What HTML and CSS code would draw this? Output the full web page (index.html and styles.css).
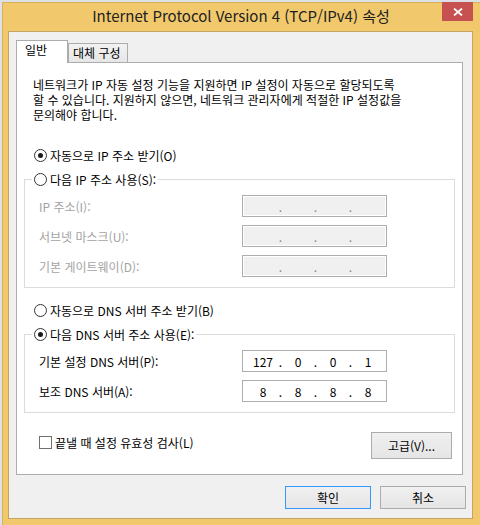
FILE: index.html
```html
<!DOCTYPE html>
<html lang="ko">
<head>
    <meta charset="UTF-8">
    <title>Internet Protocol Version 4 (TCP/IPv4) 속성</title>
    <link rel="stylesheet" href="styles.css">
</head>
<body>
    <div class="window">
        <div class="titlebar">
            <span></span>
            <div class="title">Internet Protocol Version 4 (TCP/IPv4) 속성</div>
            <button class="close">
                <svg width="10" height="8" viewBox="0 0 10 8">
                    <path d="M1 0.5 L9 7.5 M9 0.5 L1 7.5" stroke="#fff" stroke-width="1.7" fill="none"/>
                </svg>
            </button>
        </div>
        <div class="client">
            <div class="tabs">
                <div class="tab active">일반</div>
                <div class="tab">대체 구성</div>
            </div>
            <div class="panel">
                <p class="intro">네트워크가 IP 자동 설정 기능을 지원하면 IP 설정이 자동으로 할당되도록<br>할 수 있습니다. 지원하지 않으면, 네트워크 관리자에게 적절한 IP 설정값을<br>문의해야 합니다.</p>

                <label class="option"><input type="radio" name="ip" checked>자동으로 IP 주소 받기(O)</label>
                <fieldset class="group">
                    <legend><label class="option"><input type="radio" name="ip">다음 IP 주소 사용(S):</label></legend>
                    <div class="fields">
                        <div class="field disabled">
                            <span>IP 주소(I):</span>
                            <div class="ipbox"><span class="octet"></span><span class="dot">.</span><span class="octet"></span><span class="dot">.</span><span class="octet"></span><span class="dot">.</span><span class="octet"></span></div>
                        </div>
                        <div class="field disabled">
                            <span>서브넷 마스크(U):</span>
                            <div class="ipbox"><span class="octet"></span><span class="dot">.</span><span class="octet"></span><span class="dot">.</span><span class="octet"></span><span class="dot">.</span><span class="octet"></span></div>
                        </div>
                        <div class="field disabled">
                            <span>기본 게이트웨이(D):</span>
                            <div class="ipbox"><span class="octet"></span><span class="dot">.</span><span class="octet"></span><span class="dot">.</span><span class="octet"></span><span class="dot">.</span><span class="octet"></span></div>
                        </div>
                    </div>
                </fieldset>

                <label class="option"><input type="radio" name="dns">자동으로 DNS 서버 주소 받기(B)</label>
                <fieldset class="group">
                    <legend><label class="option"><input type="radio" name="dns" checked>다음 DNS 서버 주소 사용(E):</label></legend>
                    <div class="fields">
                        <div class="field">
                            <span>기본 설정 DNS 서버(P):</span>
                            <div class="ipbox"><span class="octet">127</span><span class="dot">.</span><span class="octet">0</span><span class="dot">.</span><span class="octet">0</span><span class="dot">.</span><span class="octet">1</span></div>
                        </div>
                        <div class="field">
                            <span>보조 DNS 서버(A):</span>
                            <div class="ipbox"><span class="octet">8</span><span class="dot">.</span><span class="octet">8</span><span class="dot">.</span><span class="octet">8</span><span class="dot">.</span><span class="octet">8</span></div>
                        </div>
                    </div>
                </fieldset>

                <div class="check-row">
                    <label class="check"><input type="checkbox">끝낼 때 설정 유효성 검사(L)</label>
                    <button class="btn advanced">고급(V)...</button>
                </div>
            </div>
            <div class="footer">
                <button class="btn default">확인</button>
                <button class="btn">취소</button>
            </div>
        </div>
    </div>
</body>
</html>
```

FILE: styles.css
```css
* {
    margin: 0;
    padding: 0;
    box-sizing: border-box;
}
body {
    background: #dde1e6;
    font-family: "Noto Sans CJK KR", sans-serif;
    font-size: 12px;
    color: #000;
}
.window {
    width: 478px;
    height: 523px;
    margin: 2px 0 0 2px;
    background: #f1c96c;
    box-shadow: inset 1px 1px 0 #d9b05a;
}

/* title bar */
.titlebar {
    display: grid;
    grid-template-columns: 31px 1fr 31px;
    height: 29px;
    padding: 0 7px;
}
.title {
    text-align: center;
    line-height: 28px;
    font-size: 15px;
    color: #222;
}
.close {
    height: 19px;
    border: none;
    background: #c75050;
    display: flex;
    align-items: center;
    justify-content: center;
}

/* client area */
.client {
    height: 488px;
    margin: 0 7px 0 6px;
    padding: 8px 6px 0 7px;
    background: #f0f0f0;
    border: 1px solid #c4a463;
}
.tabs {
    display: flex;
    align-items: flex-end;
    height: 22px;
}
.tab {
    height: 19px;
    width: 60px;
    padding-left: 4px;
    line-height: 18px;
    border: 1px solid #acacac;
    border-bottom: none;
    background: linear-gradient(#f2f2f2, #e6e6e6);
}
.tab.active {
    position: relative;
    z-index: 1;
    height: 23px;
    width: 52px;
    padding-left: 8px;
    margin-bottom: -1px;
    background: #fff;
}
.panel {
    margin-right: 3px;
    padding: 0 7px 15px;
    background: #fff;
    border: 1px solid #acacac;
}
.intro {
    margin: 14px 0 0 9px;
    line-height: 15px;
}

/* radio, checkbox */
.option, .check {
    display: flex;
    align-items: center;
    height: 15px;
    line-height: 15px;
    white-space: nowrap;
}
.panel > .option {
    margin: 26px 0 0 10px;
}
.group + .option {
    margin-top: 15px;
}
.option input, .check input {
    appearance: none;
    width: 13px;
    height: 13px;
    margin-right: 3px;
    background: #fff;
    border: 1px solid #333;
}
.option input {
    border-radius: 50%;
    display: flex;
    align-items: center;
    justify-content: center;
}
.option input:checked::after {
    content: "";
    width: 5px;
    height: 5px;
    border-radius: 50%;
    background: #1a1a1a;
}
.check input {
    border-color: #707070;
}

/* group boxes */
.group {
    margin-top: 9px;
    padding: 0;
    border: 1px solid #dcdcdc;
}
.group legend {
    margin-left: 7px;
    padding: 0 2px;
}
.fields {
    display: grid;
    row-gap: 8px;
    padding: 8px 0 10px 14px;
}
.field {
    display: grid;
    grid-template-columns: 203px 145px;
    align-items: center;
}
.field.disabled {
    color: #a3a3a3;
}
.ipbox {
    display: flex;
    align-items: center;
    height: 22px;
    padding-left: 6px;
    border: 1px solid #adadad;
    background: #fff;
    color: #000;
}
.field.disabled .ipbox {
    background: #f0f0f0;
    box-shadow: inset 0 0 0 1px #fff;
    color: #8a8a8a;
}
.octet {
    width: 28px;
    text-align: center;
}
.dot {
    width: 7px;
    text-align: center;
}

.check-row {
    display: flex;
    align-items: flex-start;
    justify-content: space-between;
    margin-top: 19px;
}
.check {
    margin: 3px 0 0 15px;
}

/* buttons */
.btn {
    width: 86px;
    height: 23px;
    font-family: "Noto Sans CJK KR", sans-serif;
    font-size: 12px;
    color: #000;
    border: 1px solid #acacac;
    background: linear-gradient(#f0f0f0, #e5e5e5);
}
.btn.advanced {
    width: 81px;
    height: 27px;
    margin-right: 3px;
}
.btn.default {
    border-color: #3399ff;
}
.footer {
    display: flex;
    justify-content: flex-end;
    gap: 9px;
    margin-top: 11px;
}
```
